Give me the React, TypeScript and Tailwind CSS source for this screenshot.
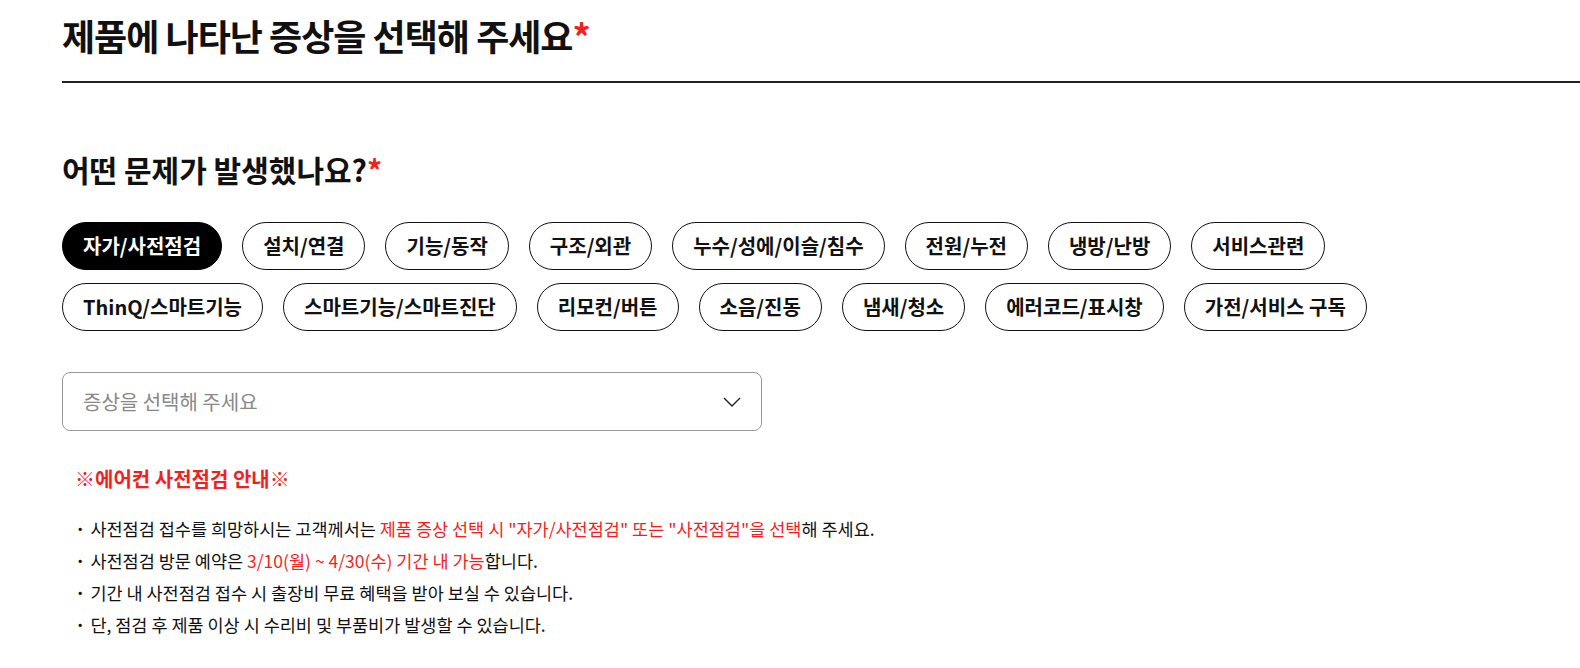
const row1 = ["자가/사전점검", "설치/연결", "기능/동작", "구조/외관", "누수/성에/이슬/침수", "전원/누전", "냉방/난방", "서비스관련"];
const row2 = ["ThinQ/스마트기능", "스마트기능/스마트진단", "리모컨/버튼", "소음/진동", "냄새/청소", "에러코드/표시창", "가전/서비스 구독"];

function Chip({ label, active }: { label: string; active?: boolean }) {
  return (
    <button
      className={
        active
          ? "h-[48px] px-[20px] rounded-full border border-black bg-black text-white text-[20px] font-bold flex items-center"
          : "h-[48px] px-[20px] rounded-full border border-[#111] bg-white text-[#111] text-[20px] font-bold flex items-center"
      }
    >
      {label}
    </button>
  );
}

export default function App() {
  return (
    <div
      className="min-h-screen bg-white text-[#111] pl-[62px]"
      style={{ fontFamily: '"Noto Sans CJK KR", "Noto Sans", sans-serif' }}
    >
      {/* Page title */}
      <h1 className="pt-[12px] pb-[23px] text-[36px] leading-[46px] font-bold tracking-[-1px] border-b-2 border-[#222]">
        제품에 나타난 증상을 선택해 주세요<span className="text-[#f21f1f]">*</span>
      </h1>

      {/* Symptom category */}
      <h2 className="mt-[68px] text-[30px] leading-[36px] font-bold">
        어떤 문제가 발생했나요?<span className="text-[#f21f1f]">*</span>
      </h2>

      <div className="mt-[35px] flex flex-col gap-[13px]">
        <div className="flex gap-[20px]">
          {row1.map((c, i) => (
            <Chip key={c} label={c} active={i === 0} />
          ))}
        </div>
        <div className="flex gap-[20px]">
          {row2.map((c) => (
            <Chip key={c} label={c} />
          ))}
        </div>
      </div>

      {/* Symptom select */}
      <div className="mt-[41px] w-[700px] h-[59px] rounded-[8px] border border-[#999] flex items-center justify-between pl-[20px] pr-[20px]">
        <span className="text-[20px] text-[#888]">증상을 선택해 주세요</span>
        <svg width="18" height="10" viewBox="0 0 18 10" fill="none">
          <polyline points="1,1 9,9 17,1" stroke="#222" strokeWidth="1.4" />
        </svg>
      </div>

      {/* Notice */}
      <div className="mt-[35px] pl-[13px]">
        <p className="text-[20px] leading-[26px] font-bold text-[#f21f1f]">※에어컨 사전점검 안내※</p>
        <ul className="mt-[21px] text-[17.5px] leading-[32px]">
          <li className="flex gap-[5px]">
            <span className="font-bold">·</span>
            <span>
              사전점검 접수를 희망하시는 고객께서는{" "}
              <span className="text-[#f21f1f]">제품 증상 선택 시 "자가/사전점검" 또는 "사전점검"을 선택</span>해 주세요.
            </span>
          </li>
          <li className="flex gap-[5px]">
            <span className="font-bold">·</span>
            <span>
              사전점검 방문 예약은 <span className="text-[#f21f1f]">3/10(월) ~ 4/30(수) 기간 내 가능</span>합니다.
            </span>
          </li>
          <li className="flex gap-[5px]">
            <span className="font-bold">·</span>
            <span>기간 내 사전점검 접수 시 출장비 무료 혜택을 받아 보실 수 있습니다.</span>
          </li>
          <li className="flex gap-[5px]">
            <span className="font-bold">·</span>
            <span>단, 점검 후 제품 이상 시 수리비 및 부품비가 발생할 수 있습니다.</span>
          </li>
        </ul>
      </div>
    </div>
  );
}
